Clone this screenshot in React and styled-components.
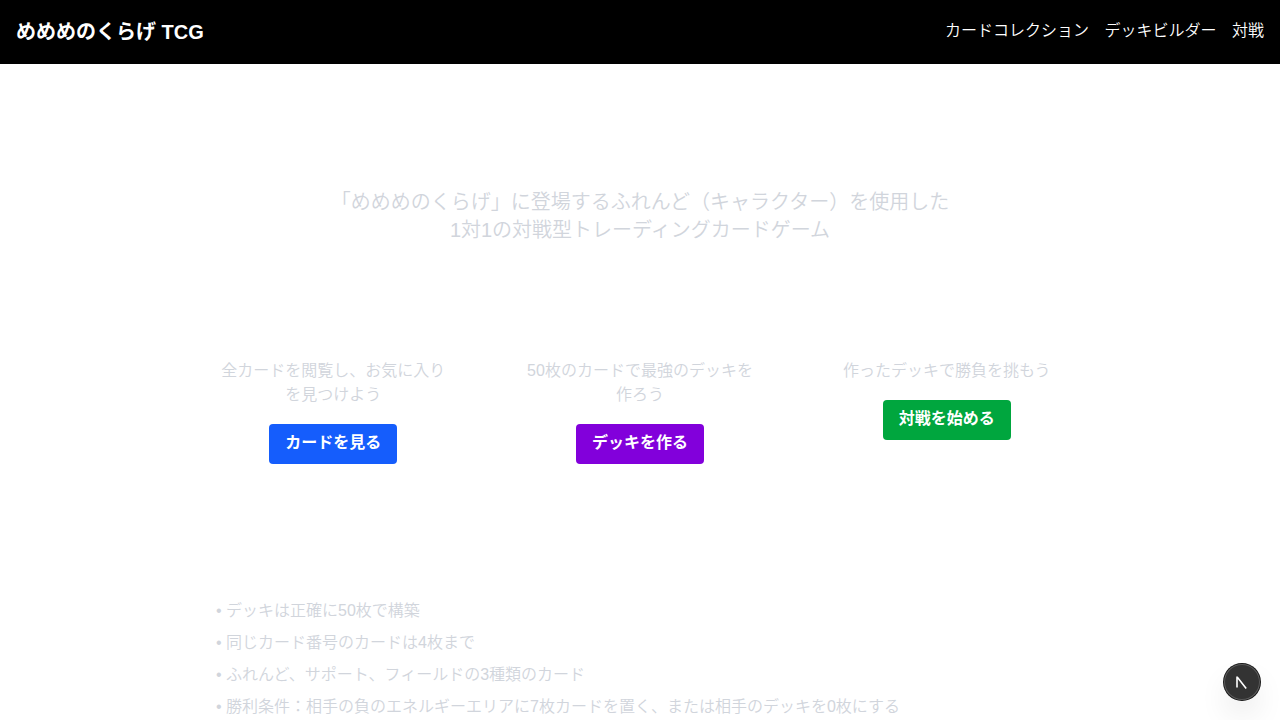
import React from 'react';
import styled, { createGlobalStyle } from 'styled-components';

const GlobalStyle = createGlobalStyle`
  *, *::before, *::after { box-sizing: border-box; }
  body {
    margin: 0;
    height: 720px;
    overflow: hidden;
    background: #fff;
    color: #fff;
    font: 350 16px/24px "Liberation Sans", "Noto Sans CJK JP", sans-serif;
  }
  h1, h2, h3, p, ul { margin: 0; padding: 0; font: inherit; }
`;

const Header = styled.header`
  height: 64px;
  padding: 0 16px;
  background: #000;
  display: flex;
  align-items: center;
  justify-content: space-between;
`;
const Brand = styled.div`
  font-size: 20px;
  line-height: 28px;
  font-weight: 700;
`;
const Nav = styled.nav`
  display: flex;
  gap: 15.5px;
  padding-bottom: 2px;
`;
const NavLink = styled.a`
  color: #fff;
`;
const Main = styled.main`
  padding: 124px 16px 0;
`;
const Lead = styled.p`
  color: #d1d5dc;
  text-align: center;
  font-size: 20px;
  line-height: 28px;
`;
const Cards = styled.section`
  width: 896px;
  margin: 115px auto 0;
  display: grid;
  grid-template-columns: repeat(3, 1fr);
  gap: 24px;
`;
const Card = styled.article`
  padding: 0 24px;
  display: flex;
  flex-direction: column;
  align-items: center;
  gap: 17px;
  text-align: center;
`;
const CardText = styled.p`
  color: #d1d5dc;
`;
const Button = styled.button`
  height: 40px;
  padding: 0 16px 2px;
  border: 0;
  border-radius: 4px;
  background: ${(p) => p.$color};
  color: #fff;
  font: inherit;
  font-weight: 700;
  white-space: nowrap;
`;
const Rules = styled.ul`
  width: 848px;
  margin: 135px auto 0;
  list-style: none;
  color: #d1d5dc;
  display: grid;
  gap: 8px;
`;
const DevBadge = styled.div`
  position: fixed;
  left: 1224px;
  top: 664px;
  width: 36px;
  height: 36px;
  border-radius: 50%;
  background: #333;
  box-shadow: 0 0 0 1px #171717, inset 0 0 0 1px rgba(255, 255, 255, 0.2),
    0 16px 32px -8px rgba(0, 0, 0, 0.24);
`;

const cards = [
  { lines: ['全カードを閲覧し、お気に入り', 'を見つけよう'], action: 'カードを見る', color: '#155dfc' },
  { lines: ['50枚のカードで最強のデッキを', '作ろう'], action: 'デッキを作る', color: '#8200db' },
  { lines: ['作ったデッキで勝負を挑もう'], action: '対戦を始める', color: '#00a63e' },
];

const rules = [
  'デッキは正確に50枚で構築',
  '同じカード番号のカードは4枚まで',
  'ふれんど、サポート、フィールドの3種類のカード',
  '勝利条件：相手の負のエネルギーエリアに7枚カードを置く、または相手のデッキを0枚にする',
];

export default function App() {
  return (
    <>
      <GlobalStyle />
      <Header>
        <Brand>めめめのくらげ TCG</Brand>
        <Nav>
          <NavLink>カードコレクション</NavLink>
          <NavLink>デッキビルダー</NavLink>
          <NavLink>対戦</NavLink>
        </Nav>
      </Header>
      <Main>
        <Lead>
          「めめめのくらげ」に登場するふれんど（キャラクター）を使用した
          <br />
          1対1の対戦型トレーディングカードゲーム
        </Lead>
        <Cards>
          {cards.map((card) => (
            <Card key={card.action}>
              <CardText>
                {card.lines.map((line, i) => (
                  <React.Fragment key={line}>
                    {i > 0 && <br />}
                    {line}
                  </React.Fragment>
                ))}
              </CardText>
              <Button $color={card.color}>{card.action}</Button>
            </Card>
          ))}
        </Cards>
        <Rules>
          {rules.map((rule) => (
            <li key={rule}>• {rule}</li>
          ))}
        </Rules>
      </Main>
      <DevBadge>
        <svg width="36" height="36" viewBox="0 0 36 36" fill="none">
          <path d="M13 23.5V13.2h.4l8.8 11.3" stroke="#fff" strokeWidth="1.6" />
        </svg>
      </DevBadge>
    </>
  );
}
